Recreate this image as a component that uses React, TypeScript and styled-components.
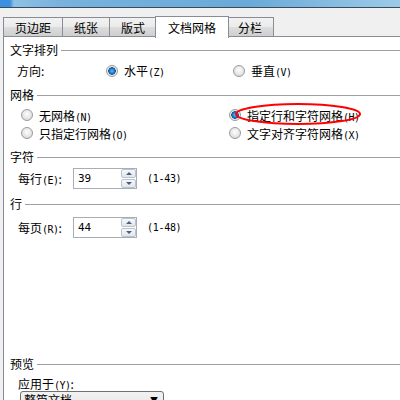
import styled, { createGlobalStyle } from 'styled-components'

const GlobalStyle = createGlobalStyle`
  body {
    margin: 0;
    background: #f0f0f0;
    font-family: 'Noto Sans CJK SC', 'DejaVu Sans', sans-serif;
    font-size: 12px;
    color: #000;
  }
`
const Window = styled.div`
  width: 400px;
  height: 400px;
  overflow: hidden;
  display: flex;
  flex-direction: column;
  background: #f0f0f0;
`
const TitleBar = styled.div`
  height: 7px;
  flex-shrink: 0;
  background: linear-gradient(90deg, #3d8fe0 0px, #3d8fe0 10px, #8fc1e3 14px, #78b2dd 60px, #6aaad8 250px, #9ccbe8 400px);
  border-bottom: 1px solid #3b4a5a;
`
const TabStrip = styled.div`
  display: flex;
  align-items: flex-end;
  margin-top: 7px;
  padding-left: 4px;
  height: 22px;
  flex-shrink: 0;
  position: relative;
  z-index: 1;
`
const Tab = styled.div<{ $active?: boolean }>`
  box-sizing: border-box;
  height: ${({ $active }) => ($active ? '22px' : '20px')};
  margin: ${({ $active }) => ($active ? '0 -2px -1px' : '0 0 0 -1px')};
  padding: ${({ $active }) => ($active ? '3px 12px 0' : '2px 11px 0')};
  border: 1px solid #898c95;
  border-bottom: ${({ $active }) => ($active ? 'none' : '1px solid #898c95')};
  background: ${({ $active }) => ($active ? '#fff' : 'linear-gradient(#f2f2f2, #ebebeb 50%, #dddddd 51%, #cfcfcf)')};
  position: relative;
  z-index: ${({ $active }) => ($active ? 2 : 1)};
  font-size: 12px;
  line-height: 15px;
  white-space: nowrap;
`
const Panel = styled.div`
  flex: 1;
  margin-left: 3px;
  background: #fff;
  border-left: 1px solid #898c95;
  border-top: 1px solid #898c95;
  margin-top: -1px;
  display: flex;
  flex-direction: column;
`
const GroupHeader = styled.div<{ $top: number }>`
  display: flex;
  align-items: center;
  gap: 3px;
  height: 14px;
  margin-top: ${({ $top }) => $top}px;
  padding-left: 6px;
  line-height: 14px;
  &::after {
    content: '';
    flex: 1;
    height: 1px;
    background: #a0a0a0;
  }
`
const DirectionRow = styled.div`
  display: grid;
  grid-template-columns: 89px 127px auto;
  align-items: center;
  height: 16px;
  margin-top: 5px;
  padding-left: 13px;
`
const RadioGrid = styled.div`
  display: grid;
  grid-template-columns: 208px auto;
  row-gap: 2px;
  margin-top: 5px;
  padding-left: 17px;
`
const RadioOption = styled.div`
  display: flex;
  align-items: center;
  gap: 6px;
  height: 16px;
  position: relative;
  white-space: nowrap;
`
const RadioDot = styled.span<{ $checked?: boolean }>`
  box-sizing: border-box;
  width: 12px;
  height: 12px;
  border-radius: 50%;
  border: 1px solid #9a9a9a;
  background: ${({ $checked }) =>
    $checked
      ? 'radial-gradient(circle at 50% 50%, #4fc3ff 0, #1a78c9 2.5px, #1b4f8a 3.5px, #e8e8e8 4px, #f4f4f4 100%)'
      : 'radial-gradient(circle at 50% 40%, #fdfdfd 0, #e6e6e6 55%, #cfcfcf 100%)'};
  flex-shrink: 0;
`
const Key = styled.span`
  font-family: 'DejaVu Sans Mono', monospace;
  font-size: 10px;
  letter-spacing: -0.5px;
`
const Highlight = styled.svg`
  position: absolute;
  left: 6px;
  top: -4px;
  overflow: visible;
  pointer-events: none;
`
const SpinRow = styled.div<{ $top: number }>`
  display: grid;
  grid-template-columns: 55px 74px auto;
  align-items: center;
  height: 21px;
  margin-top: ${({ $top }) => $top}px;
  padding-left: 14px;
`
const SpinBox = styled.div`
  box-sizing: border-box;
  width: 64px;
  height: 21px;
  border: 1px solid #abadb3;
  display: flex;
  align-items: center;
  padding-left: 4px;
  font-family: 'DejaVu Sans Mono', monospace;
  font-size: 11px;
`
const SpinValue = styled.span`
  flex: 1;
`
const SpinButtons = styled.div`
  width: 15px;
  height: 19px;
  display: flex;
  flex-direction: column;
  gap: 1px;
`
const SpinHalf = styled.div<{ $down?: boolean }>`
  flex: 1;
  border: 1px solid #b9c3cf;
  border-radius: 2px;
  background: linear-gradient(#f6f8fa, #e1e6ec);
  display: flex;
  align-items: center;
  justify-content: center;
  &::before {
    content: '';
    border-left: 3px solid transparent;
    border-right: 3px solid transparent;
    ${({ $down }) => ($down ? 'border-top: 3px solid #4b5e7c;' : 'border-bottom: 3px solid #4b5e7c;')}
  }
`
const Range = styled.span`
  font-family: 'DejaVu Sans Mono', monospace;
  font-size: 10px;
  letter-spacing: -0.3px;
`
const PlainRow = styled.div`
  height: 14px;
  line-height: 14px;
  margin-top: 6px;
  padding-left: 14px;
`
const Select = styled.div`
  box-sizing: border-box;
  width: 144px;
  height: 18px;
  margin-left: 16px;
  border: 1px solid #707070;
  border-radius: 3px;
  background: linear-gradient(#f2f2f2, #e6e6e6);
  display: flex;
  align-items: center;
  justify-content: space-between;
  padding: 0 5px 0 3px;
  line-height: 16px;
`
const Arrow = styled.span`
  font-size: 8px;
`

const Radio = ({ checked, label, hotkey, circled }: { checked?: boolean; label: string; hotkey: string; circled?: boolean }) => (
  <RadioOption>
    <RadioDot $checked={checked} />
    <span>
      {label}<Key>({hotkey})</Key>
    </span>
    {circled && (
      <Highlight width="126" height="22">
        <ellipse cx="63" cy="11" rx="62" ry="10" fill="none" stroke="#ff0000" strokeWidth="2" />
      </Highlight>
    )}
  </RadioOption>
)

const Spinner = ({ label, hotkey, value, range, top }: { label: string; hotkey: string; value: string; range: string; top: number }) => (
  <SpinRow $top={top}>
    <span>{label}<Key>({hotkey})</Key>:</span>
    <SpinBox>
      <SpinValue>{value}</SpinValue>
      <SpinButtons>
        <SpinHalf />
        <SpinHalf $down />
      </SpinButtons>
    </SpinBox>
    <Range>{range}</Range>
  </SpinRow>
)

export default function App() {
  const tabs = ['页边距', '纸张', '版式', '文档网格', '分栏']
  return (
    <Window>
      <GlobalStyle />
      <TitleBar />
      <TabStrip>
        {tabs.map((t) => (
          <Tab key={t} $active={t === '文档网格'}>{t}</Tab>
        ))}
      </TabStrip>
      <Panel>
        <GroupHeader $top={6}>文字排列</GroupHeader>
        <DirectionRow>
          <span>方向:</span>
          <Radio checked label="水平" hotkey="Z" />
          <Radio label="垂直" hotkey="V" />
        </DirectionRow>
        <GroupHeader $top={10}>网格</GroupHeader>
        <RadioGrid>
          <Radio label="无网格" hotkey="N" />
          <Radio checked label="指定行和字符网格" hotkey="H" circled />
          <Radio label="只指定行网格" hotkey="O" />
          <Radio label="文字对齐字符网格" hotkey="X" />
        </RadioGrid>
        <GroupHeader $top={9}>字符</GroupHeader>
        <Spinner label="每行" hotkey="E" value="39" range="(1-43)" top={4} />
        <GroupHeader $top={8}>行</GroupHeader>
        <Spinner label="每页" hotkey="R" value="44" range="(1-48)" top={6} />
        <GroupHeader $top={119}>预览</GroupHeader>
        <PlainRow>应用于<Key>(Y)</Key>:</PlainRow>
        <Select>
          <span>整篇文档</span>
          <Arrow>▼</Arrow>
        </Select>
      </Panel>
    </Window>
  )
}
